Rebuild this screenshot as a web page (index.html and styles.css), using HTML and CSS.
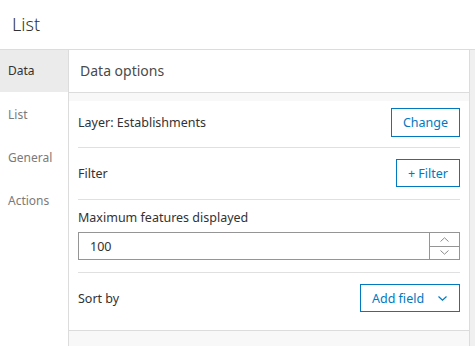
FILE: index.html
```html
<!DOCTYPE html>
<html lang="en">
<head>
  <meta charset="UTF-8" />
  <title>List</title>
  <link rel="stylesheet" href="styles.css">
</head>
<body>
  <header class="title-bar">List</header>

  <div class="layout">
    <nav class="side-tabs">
      <div class="tab active">Data</div>
      <div class="tab">List</div>
      <div class="tab">General</div>
      <div class="tab">Actions</div>
    </nav>

    <main class="panel">
      <div class="panel-title">Data options</div>
      <div class="panel-gap"></div>

      <div class="panel-body">
        <div class="row row-layer">
          <span>Layer: Establishments</span>
          <button class="btn">Change</button>
        </div>
        <div class="row row-filter">
          <span>Filter</span>
          <button class="btn">+ Filter</button>
        </div>
        <div class="row row-max">
          <label for="maxFeatures">Maximum features displayed</label>
          <div class="number-input">
            <input type="text" id="maxFeatures" value="100" />
            <div class="spinner">
              <span class="spin-btn">
                <svg width="9" height="5" viewBox="0 0 9 5"><path d="M0.5 4.5 L4.5 0.8 L8.5 4.5" fill="none" stroke="#8c8c8c" stroke-width="1"/></svg>
              </span>
              <span class="spin-btn">
                <svg width="9" height="5" viewBox="0 0 9 5"><path d="M0.5 0.5 L4.5 4.2 L8.5 0.5" fill="none" stroke="#8c8c8c" stroke-width="1"/></svg>
              </span>
            </div>
          </div>
        </div>
        <div class="row row-sort">
          <span>Sort by</span>
          <button class="btn btn-dropdown">
            Add field
            <svg width="9" height="5" viewBox="0 0 9 5"><path d="M0.5 0.5 L4.5 4.2 L8.5 0.5" fill="none" stroke="#0079c1" stroke-width="1.2"/></svg>
          </button>
        </div>
      </div>
    </main>

    <div class="scroll-track"></div>
  </div>
</body>
</html>
```

FILE: styles.css
```css
body {
  margin: 0;
  font-family: "Noto Sans", sans-serif;
  color: #323232;
  background: #fff;
  height: 346px;
  overflow: hidden;
}
.title-bar {
  height: 49px;
  line-height: 49px;
  padding-left: 12px;
  font-size: 18px;
  font-weight: 300;
  border-bottom: 1px solid #dcdcdc;
}
.layout {
  display: flex;
  height: 296px;
}
.side-tabs {
  width: 68px;
  border-right: 1px solid #dcdcdc;
  flex-shrink: 0;
}
.tab {
  height: 43px;
  line-height: 43px;
  padding-left: 8px;
  font-size: 12px;
  color: #7a7a7a;
}
.tab.active {
  height: 42px;
  line-height: 42px;
  margin-bottom: 1px;
  background: #ebebeb;
  color: #323232;
}
.panel {
  flex: 1;
  display: flex;
  flex-direction: column;
  background: #f8f8f8;
}
.panel-title {
  height: 42px;
  line-height: 42px;
  padding-left: 11px;
  font-size: 14px;
  color: #4a4a4a;
  background: #fff;
  border-bottom: 1px solid #dcdcdc;
}
.panel-gap {
  height: 8px;
}
.panel-body {
  background: #fff;
  padding: 0 9px;
  border-bottom: 1px solid #dcdcdc;
}
.row {
  display: flex;
  align-items: center;
  justify-content: space-between;
  font-size: 12.5px;
  border-bottom: 1px solid #e0e0e0;
}
.row-layer {
  padding: 7px 0 10px;
}
.row-filter {
  padding: 11px 0 12px;
}
.row-max {
  flex-direction: column;
  align-items: stretch;
  padding: 10px 0 12px;
}
.row-max label {
  line-height: 16px;
  margin-bottom: 6px;
}
.row-sort {
  border-bottom: none;
  padding: 11px 0 18px;
}
.btn {
  height: 28px;
  padding: 0 11px;
  font-family: inherit;
  font-size: 12.5px;
  color: #0079c1;
  background: #fff;
  border: 1px solid #0079c1;
  cursor: pointer;
}
.row-layer .btn {
  height: 29px;
}
.btn-dropdown {
  width: 100px;
  display: flex;
  align-items: center;
  justify-content: space-between;
  padding: 0 12px 0 11px;
}
.number-input {
  display: flex;
  height: 28px;
  border: 1px solid #959595;
  box-sizing: border-box;
}
.number-input input {
  flex: 1;
  border: none;
  padding: 0 11px;
  font-family: inherit;
  font-size: 12.5px;
  color: #323232;
  outline: none;
}
.spinner {
  width: 29px;
  border-left: 1px solid #959595;
  display: flex;
  flex-direction: column;
}
.spin-btn {
  flex: 1;
  display: flex;
  align-items: center;
  justify-content: center;
}
.spin-btn + .spin-btn {
  border-top: 1px solid #959595;
}
.scroll-track {
  width: 5px;
  background: #f0f0f0;
  border-left: 1px solid #dcdcdc;
  flex-shrink: 0;
}
```
